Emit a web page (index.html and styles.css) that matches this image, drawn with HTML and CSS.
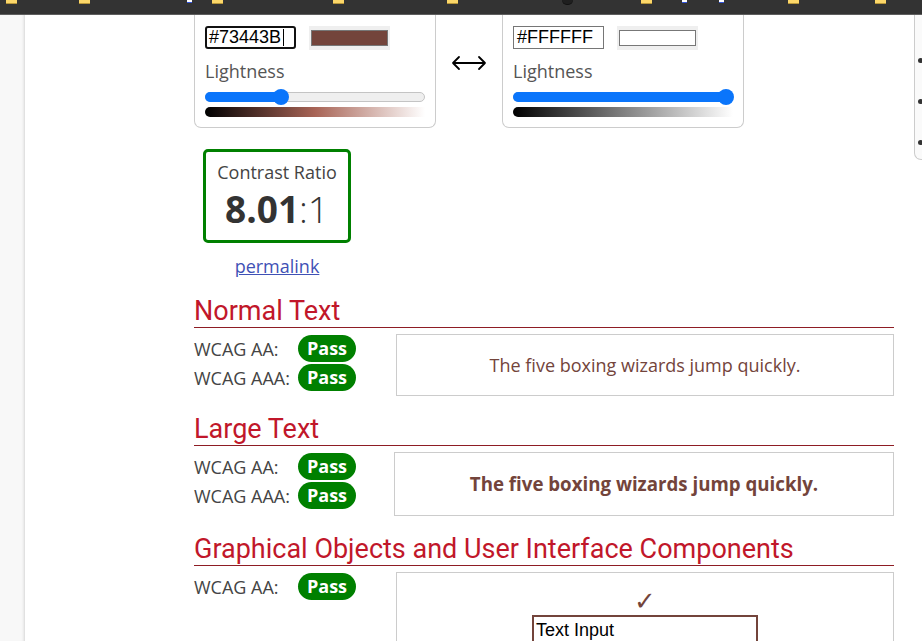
FILE: index.html
```html
<!DOCTYPE html>
<html lang="en">
<head>
<meta charset="utf-8">
<title>Contrast Checker</title>
<link rel="stylesheet" href="styles.css">
</head>
<body>
<div class="topbar">
  <span class="ic"></span><span class="ic"></span><span class="ic glyph"></span><span class="ic"></span><span class="ic"></span><span class="ic"></span><span class="ic dark"></span><span class="ic"></span><span class="ic glyph"></span><span class="ic glyph"></span><span class="ic"></span><span class="ic"></span>
</div>
<div class="page">
  <aside class="gutter"></aside>
  <main class="main">
    <div class="pickers">
      <div class="card">
        <div class="inputs">
          <span class="hex focused">#73443B<span class="caret"></span></span>
          <span class="swatch"><span class="swatch-fill fg"></span></span>
        </div>
        <div class="label">Lightness</div>
        <div class="slider"><div class="fill" style="width:35%"><span class="thumb"></span></div></div>
        <div class="grad grad-fg"></div>
      </div>
      <div class="swap">
        <svg width="36" height="16" viewBox="0 0 36 16" aria-hidden="true"><path d="M2 8H34M8 2L2 8L8 14M28 2L34 8L28 14" fill="none" stroke="#000" stroke-width="1.8" stroke-linecap="round" stroke-linejoin="round"/></svg>
      </div>
      <div class="card">
        <div class="inputs">
          <span class="hex">#FFFFFF</span>
          <span class="swatch"><span class="swatch-fill bg"></span></span>
        </div>
        <div class="label">Lightness</div>
        <div class="slider"><div class="fill" style="width:97.5%"><span class="thumb"></span></div></div>
        <div class="grad grad-bg"></div>
      </div>
      <div class="side-card">
        <span class="dot"></span><span class="dot"></span><span class="dot"></span>
      </div>
    </div>

    <div class="result">
      <div class="ratio-box">
        <div class="ratio-title">Contrast Ratio</div>
        <div class="ratio-value"><b>8.01</b>:1</div>
      </div>
      <a class="permalink" href="#">permalink</a>
    </div>

    <section class="section">
      <h2>Normal Text</h2>
      <div class="row">
        <div class="levels">
          <div class="level"><span class="lvl-name">WCAG AA:</span><span class="badge">Pass</span></div>
          <div class="level"><span class="lvl-name">WCAG AAA:</span><span class="badge">Pass</span></div>
        </div>
        <div class="sample normal">The five boxing wizards jump quickly.</div>
      </div>
    </section>

    <section class="section">
      <h2>Large Text</h2>
      <div class="row">
        <div class="levels">
          <div class="level"><span class="lvl-name">WCAG AA:</span><span class="badge">Pass</span></div>
          <div class="level"><span class="lvl-name">WCAG AAA:</span><span class="badge">Pass</span></div>
        </div>
        <div class="sample large">The five boxing wizards jump quickly.</div>
      </div>
    </section>

    <section class="section">
      <h2>Graphical Objects and User Interface Components</h2>
      <div class="row">
        <div class="levels">
          <div class="level"><span class="lvl-name">WCAG AA:</span><span class="badge">Pass</span></div>
        </div>
        <div class="sample ui">
          <span class="check">&#10003;</span>
          <span class="text-input">Text Input</span>
        </div>
      </div>
    </section>
  </main>
</div>
</body>
</html>
```

FILE: styles.css
```css
html, body {
  margin: 0;
  padding: 0;
}
body {
  width: 922px;
  height: 641px;
  overflow: hidden;
  background: #fff;
  font-family: "Open Sans", sans-serif;
  color: #333;
}

/* top bar */
.topbar {
  height: 14px;
  background: #333;
  border-bottom: 1px solid #5e5e5e;
  display: flex;
  align-items: flex-start;
}
.ic {
  width: 11px;
  height: 3px;
  background: #fcd769;
  border-bottom: 1px solid #b8973a;
  flex: none;
}
.ic.glyph {
  width: 5px;
  height: 2px;
  background: #fff;
  border-bottom: 1px solid #3355dd;
}
.ic.dark {
  background: #1f1f1f;
  border-bottom-color: #111;
  border-radius: 0 0 5px 5px;
  height: 4px;
}
.ic:nth-child(1) { margin-left: 6px; }
.ic:nth-child(2) { margin-left: 62px; }
.ic:nth-child(3) { margin-left: 97px; }
.ic:nth-child(4) { margin-left: 20px; }
.ic:nth-child(5) { margin-left: 110px; }
.ic:nth-child(6) { margin-left: 103px; }
.ic:nth-child(7) { margin-left: 104px; }
.ic:nth-child(8) { margin-left: 68px; }
.ic:nth-child(9) { margin-left: 30px; }
.ic:nth-child(10) { margin-left: 32px; }
.ic:nth-child(11) { margin-left: 64px; }
.ic:nth-child(12) { margin-left: 76px; }

/* page */
.page {
  display: flex;
  height: 626px;
}
.gutter {
  width: 25px;
  flex: none;
  background: #f8f8f8;
  box-shadow: inset -3px 0 3px -2px rgba(0, 0, 0, 0.14);
}
.main {
  flex: 1;
  padding-left: 169px;
  min-width: 0;
}

/* pickers */
.pickers {
  display: flex;
  align-items: flex-start;
  height: 113px;
}
.card {
  width: 220px;
  flex: none;
  padding: 11px 10px 10px;
  border: 1px solid #ccc;
  border-top: none;
  border-radius: 0 0 7px 7px;
}
.inputs {
  display: flex;
  align-items: flex-start;
  gap: 13px;
  height: 24px;
}
.hex {
  position: relative;
  box-sizing: border-box;
  width: 91px;
  height: 23px;
  border: 1px solid #767676;
  padding: 0 3px;
  font: 18px/21px "Liberation Sans", Arial, sans-serif;
  color: #000;
}
.hex.focused {
  border: 2px solid #111;
  border-radius: 3px;
  padding: 0 2px;
  line-height: 19px;
}
.caret {
  position: absolute;
  left: 76px;
  top: 1px;
  width: 1px;
  height: 17px;
  background: #000;
}
.swatch {
  box-sizing: border-box;
  width: 81px;
  height: 24px;
  padding: 4px 2px;
  background: #efefef;
  display: flex;
}
.swatch-fill {
  flex: 1;
  border: 1px solid #777;
}
.swatch-fill.fg { background: #73443b; }
.swatch-fill.bg { background: #fff; }

.label {
  margin-top: 8px;
  font-size: 18px;
  line-height: 26px;
  color: #555;
}
.slider {
  margin-top: 8px;
  height: 8px;
  border: 1px solid #c4c4c4;
  border-radius: 5px;
  background: #efefef;
}
.fill {
  position: relative;
  height: 10px;
  margin: -1px 0 0 -1px;
  border-radius: 5px 0 0 5px;
  background: #0a75fb;
}
.thumb {
  position: absolute;
  right: -8px;
  top: -3px;
  width: 16px;
  height: 16px;
  border-radius: 50%;
  background: #0a75fb;
}
.grad {
  margin-top: 5px;
  height: 10px;
  border-radius: 5px 0 0 5px;
}
.grad-fg { background: linear-gradient(to right, #000, #a86456 50%, #fff); }
.grad-bg { background: linear-gradient(to right, #000, #808080 50%, #fff); }

.swap {
  width: 66px;
  flex: none;
  display: flex;
  justify-content: center;
  padding-top: 40px;
}
.swap svg { display: block; }

.side-card {
  margin-left: 170px;
  width: 60px;
  height: 145px;
  flex: none;
  box-sizing: border-box;
  border-left: 1px solid #ccc;
  border-bottom: 1px solid #ccc;
  border-radius: 0 0 0 7px;
  background: #fafafa;
  display: flex;
  flex-direction: column;
  gap: 36px;
  padding: 43px 0 0 3px;
}
.dot {
  width: 5px;
  height: 5px;
  border-radius: 50%;
  background: #333;
}

/* result */
.result {
  width: 166px;
  display: flex;
  flex-direction: column;
  align-items: center;
  margin-top: 21px;
}
.ratio-box {
  box-sizing: border-box;
  width: 148px;
  height: 94px;
  border: 3px solid #008000;
  border-radius: 5px;
  text-align: center;
  padding-top: 9px;
}
.ratio-title {
  font-size: 18px;
  line-height: 22px;
  color: #444;
}
.ratio-value {
  margin-top: 6px;
  font-size: 37px;
  line-height: 40px;
  font-weight: 300;
  color: #333;
}
.ratio-value b { font-weight: 700; }
.permalink {
  margin-top: 11px;
  font-size: 18px;
  line-height: 24px;
  color: #3f51b5;
  text-decoration: underline;
}

/* sections */
.section {
  width: 700px;
  margin-top: 17px;
}
.section + .section { margin-top: 17px; }
.section h2 {
  margin: 0;
  font: 400 27px/32px Roboto, sans-serif;
  color: #c1172a;
  border-bottom: 1px solid #8e1d24;
}
.row {
  display: flex;
  align-items: flex-start;
  margin-top: 6px;
}
.levels {
  width: 202px;
  flex: none;
}
.level {
  display: flex;
  align-items: center;
  height: 29px;
}
.lvl-name {
  width: 104px;
  font-size: 18px;
  color: #444;
}
.badge {
  width: 58px;
  height: 27px;
  border-radius: 14px;
  background: #008000;
  color: #fff;
  font-weight: 700;
  font-size: 18px;
  line-height: 27px;
  text-align: center;
}
.sample {
  flex: 1;
  border: 1px solid #ccc;
  color: #73443b;
  text-align: center;
  box-sizing: border-box;
}
.sample.normal {
  height: 62px;
  line-height: 60px;
  font-size: 18px;
}
.sample.large {
  height: 64px;
  line-height: 62px;
  font-size: 18.7px;
  font-weight: 700;
  margin-left: -2px;
}
.sample.ui {
  height: 80px;
  display: flex;
  flex-direction: column;
  align-items: center;
  padding-top: 14px;
}
.check {
  font: 26px/28px "DejaVu Sans", sans-serif;
  color: #73443b;
}
.text-input {
  margin-top: 0;
  box-sizing: border-box;
  width: 226px;
  height: 30px;
  border: 2px solid #73443b;
  padding: 0 2px;
  text-align: left;
  font: 18px/26px "Liberation Sans", Arial, sans-serif;
  color: #000;
}
```
